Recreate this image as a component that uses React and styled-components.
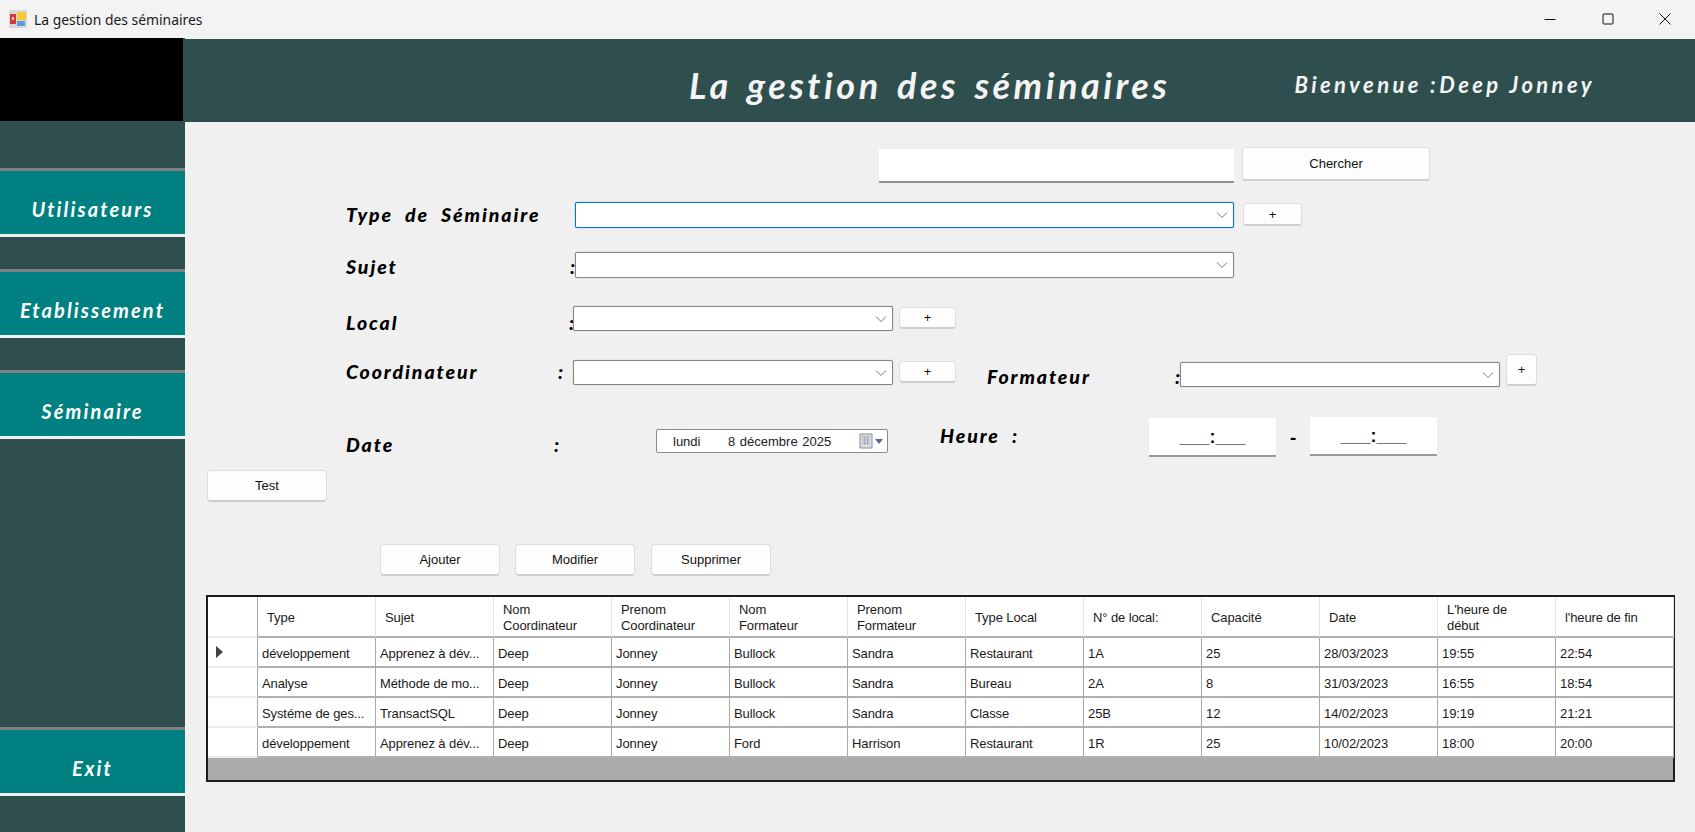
import styled, { createGlobalStyle } from "styled-components";

const GlobalStyle = createGlobalStyle`
  html, body {
    margin: 0;
    height: 100%;
    background: #f0f0f0;
    overflow: hidden;
  }
  * {
    box-sizing: border-box;
  }
`;

const HAND = `"Lato", "Open Sans", sans-serif`;
const UI = `"Liberation Sans", Arial, sans-serif`;

const Window = styled.div`
  width: 1695px;
  height: 832px;
  display: flex;
  flex-direction: column;
  font-family: ${UI};
`;

const TitleBar = styled.div`
  height: 38px;
  background: #f3f3f3;
  display: flex;
  align-items: center;
  padding: 0 1px 0 9px;
`;

const TitleText = styled.span`
  margin-left: 7px;
  font-family: "Noto Sans", "Open Sans", sans-serif;
  font-size: 13.9px;
  color: #1a1a1a;
  flex: 1;
`;

const WinButton = styled.div`
  width: 57.5px;
  height: 38px;
  display: flex;
  align-items: center;
  justify-content: center;
`;

const Frame = styled.div`
  flex: 1;
  display: flex;
  min-height: 0;
`;

const Sidebar = styled.nav`
  width: 185px;
  background: #2f4f4f;
  display: flex;
  flex-direction: column;
`;

const Logo = styled.div`
  height: 83px;
  margin-right: 2px;
  background: #000;
`;

const NavButton = styled.button`
  height: 69px;
  width: 185px;
  margin-top: ${(p) => p.$top}px;
  padding: 12px 0 0;
  background: #008080;
  border: 0;
  border-top: 3px solid #808080;
  border-bottom: 3px solid #f0f0f0;
  color: #fff;
  font-family: ${HAND};
  font-style: italic;
  font-weight: 700;
  font-size: 20px;
  letter-spacing: 2.1px;
`;

const ExitButton = styled(NavButton)`
  margin-top: auto;
  margin-bottom: 36px;
`;

const Main = styled.main`
  flex: 1;
  display: flex;
  flex-direction: column;
  min-width: 0;
`;

const Header = styled.header`
  height: 83px;
  margin-top: 1px;
  padding-top: 8px;
  background: #2f4f4f;
  color: #f4f4f4;
  display: flex;
  align-items: center;
  font-family: ${HAND};
  font-style: italic;
  font-weight: 700;
`;

const HeaderTitle = styled.h1`
  margin: 0 0 0 504px;
  font-size: 36px;
  font-weight: 700;
  letter-spacing: 3.5px;
  word-spacing: 4px;
  white-space: nowrap;
`;

const Welcome = styled.span`
  margin-left: 124px;
  font-size: 22px;
  letter-spacing: 3.4px;
  white-space: nowrap;
`;

const Content = styled.div`
  flex: 1;
  padding-top: 25px;
`;

const Row = styled.div`
  display: flex;
  align-items: flex-start;
  height: ${(p) => p.$h}px;
  margin-top: ${(p) => p.$top || 0}px;
  padding-left: ${(p) => p.$left ?? 161}px;
`;

const Label = styled.div`
  display: flex;
  flex: none;
  width: ${(p) => p.$w}px;
  margin-top: ${(p) => p.$mt || 0}px;
  margin-left: ${(p) => p.$ml || 0}px;
  height: 26px;
  line-height: 26px;
  color: #000;
  font-family: ${HAND};
  font-style: italic;
  font-weight: 900;
  font-size: 19.5px;
  letter-spacing: 1.9px;
  word-spacing: 6px;
  white-space: nowrap;
`;

const Caption = styled.span`
  width: ${(p) => p.$w}px;
  flex: none;
`;

const Combo = styled.div`
  position: relative;
  flex: none;
  width: ${(p) => p.$w}px;
  height: ${(p) => p.$h || 26}px;
  margin-top: ${(p) => p.$mt || 0}px;
  background: #fff;
  border: 1px solid ${(p) => (p.$focused ? "#0078d7" : "#868686")};
  border-radius: 2px;
  box-shadow: 0 0 1px ${(p) => (p.$focused ? "#0078d7" : "#868686")};
  display: flex;
  align-items: center;
  justify-content: flex-end;
  padding-right: 5px;
`;

const PushButton = styled.button`
  flex: none;
  width: ${(p) => p.$w}px;
  height: ${(p) => p.$h}px;
  margin-top: ${(p) => p.$mt || 0}px;
  margin-left: ${(p) => p.$ml || 0}px;
  padding: 0;
  background: #fdfdfd;
  border: 1px solid #dedede;
  border-bottom: 2px solid #cfcfcf;
  border-radius: 4px;
  color: #111;
  font-family: ${UI};
  font-size: 13px;
`;

const SearchInput = styled.div`
  width: 355px;
  height: 34px;
  margin-top: 2px;
  background: #fff;
  border-bottom: 2px solid #8f8f8f;
`;

const DatePicker = styled.div`
  flex: none;
  width: 232px;
  height: 24px;
  margin-top: 12px;
  background: #fff;
  border: 1px solid #8a8a8a;
  border-radius: 2px;
  display: flex;
  align-items: center;
  padding: 0 2px 0 16px;
  font-size: 13px;
  color: #222;
`;

const DateDay = styled.span`
  width: 55px;
`;

const DateValue = styled.span`
  flex: 1;
  word-spacing: 1px;
`;

const MaskInput = styled.div`
  flex: none;
  width: 127px;
  height: 39px;
  margin-top: ${(p) => p.$mt || 0}px;
  background: #fff;
  border-bottom: 2px solid #9a9a9a;
  font-family: ${UI};
  font-weight: 700;
  font-size: 18px;
  line-height: 38px;
  text-align: center;
  color: #000;
`;

const Dash = styled.span`
  flex: none;
  width: 34px;
  margin-top: 8px;
  text-align: center;
  font-family: ${HAND};
  font-weight: 900;
  font-size: 18px;
  line-height: 26px;
`;

const Grid = styled.div`
  width: 1469px;
  height: 187px;
  margin: 19px 0 0 21px;
  background: #ababab;
  border: 2px solid #1c1c1c;
  font-size: 13px;
  letter-spacing: -0.1px;
  color: #1a1a1a;
`;

const GridRow = styled.div`
  display: grid;
  grid-template-columns: 50px repeat(12, 118px);
  height: ${(p) => p.$h}px;
  background: #fff;
`;

const HeadCell = styled.div`
  padding: 3px 0 0 9px;
  display: flex;
  align-items: center;
  line-height: 16px;
  border-right: 1px solid #e6e6e6;
  border-bottom: 2px solid #b0b0b0;
`;

const Cell = styled.div`
  padding: 2px 0 0 4px;
  display: flex;
  align-items: center;
  white-space: nowrap;
  overflow: hidden;
  border-right: 1px solid #a8a8a8;
  border-bottom: 2px solid #b0b0b0;
`;

const RowHeader = styled.div`
  display: flex;
  align-items: center;
  padding-left: 8px;
  border-right: 1px solid #a8a8a8;
  border-bottom: 2px solid #ececec;
`;

const columns = [
  "Type",
  "Sujet",
  ["Nom", "Coordinateur"],
  ["Prenom", "Coordinateur"],
  ["Nom", "Formateur"],
  ["Prenom", "Formateur"],
  "Type Local",
  "N° de local:",
  "Capacité",
  "Date",
  ["L'heure de", "début"],
  "l'heure de fin",
];

const rows = [
  ["développement", "Apprenez à dév...", "Deep", "Jonney", "Bullock", "Sandra", "Restaurant", "1A", "25", "28/03/2023", "19:55", "22:54"],
  ["Analyse", "Méthode de mo...", "Deep", "Jonney", "Bullock", "Sandra", "Bureau", "2A", "8", "31/03/2023", "16:55", "18:54"],
  ["Systéme de ges...", "TransactSQL", "Deep", "Jonney", "Bullock", "Sandra", "Classe", "25B", "12", "14/02/2023", "19:19", "21:21"],
  ["développement", "Apprenez à dév...", "Deep", "Jonney", "Ford", "Harrison", "Restaurant", "1R", "25", "10/02/2023", "18:00", "20:00"],
];

const AppIcon = () => (
  <svg width="18" height="18" viewBox="0 0 18 18">
    <rect width="18" height="18" fill="#d8d8d8" />
    <rect x="1" y="4" width="6" height="10" fill="#d23b3b" />
    <rect x="3" y="7" width="2" height="3" fill="#f4d0d0" />
    <rect x="8" y="2" width="9" height="8" fill="#f7c936" />
    <rect x="8" y="11" width="8" height="5" fill="#5b9be0" />
  </svg>
);

const Chevron = () => (
  <svg width="12" height="8" viewBox="0 0 12 8">
    <path d="M1 1.5 L6 6.5 L11 1.5" fill="none" stroke="#777" strokeWidth="1" />
  </svg>
);

const CalendarIcon = () => (
  <svg width="28" height="18" viewBox="0 0 28 18">
    <rect x="3" y="2" width="12" height="14" fill="#d9dde3" stroke="#8b8f96" />
    <path d="M5 5 H13 M5 8 H13 M5 11 H13 M7.5 5 V13 M10.5 5 V13" stroke="#a3a9b2" />
    <path d="M18 7 H26 L22 12 Z" fill="#4d6a92" />
  </svg>
);

const App = () => {
  return (
    <Window>
      <GlobalStyle />
      <TitleBar>
        <AppIcon />
        <TitleText>La gestion des séminaires</TitleText>
        <WinButton>
          <svg width="12" height="12" viewBox="0 0 12 12">
            <path d="M0.5 6.5 H11.5" stroke="#111" />
          </svg>
        </WinButton>
        <WinButton>
          <svg width="12" height="12" viewBox="0 0 12 12">
            <rect x="1" y="1" width="10" height="10" rx="1" fill="none" stroke="#111" />
          </svg>
        </WinButton>
        <WinButton>
          <svg width="12" height="12" viewBox="0 0 12 12">
            <path d="M0.5 0.5 L11.5 11.5 M11.5 0.5 L0.5 11.5" stroke="#111" />
          </svg>
        </WinButton>
      </TitleBar>

      <Frame>
        <Sidebar>
          <Logo />
          <NavButton $top={47}>Utilisateurs</NavButton>
          <NavButton $top={32}>Etablissement</NavButton>
          <NavButton $top={32}>Séminaire</NavButton>
          <ExitButton>Exit</ExitButton>
        </Sidebar>

        <Main>
          <Header>
            <HeaderTitle>La gestion des séminaires</HeaderTitle>
            <Welcome>Bienvenue :Deep Jonney</Welcome>
          </Header>

          <Content>
            <Row $h={36} $left={694}>
              <SearchInput />
              <PushButton $w={188} $h={34} $ml={8}>Chercher</PushButton>
            </Row>

            <Row $h={26} $top={19}>
              <Label $w={229}>Type de Séminaire</Label>
              <Combo $w={659} $focused><Chevron /></Combo>
              <PushButton $w={59} $h={23} $mt={1} $ml={9}>+</PushButton>
            </Row>

            <Row $h={26} $top={24}>
              <Label $w={229} $mt={2}><Caption $w={224}>Sujet</Caption>:</Label>
              <Combo $w={659}><Chevron /></Combo>
            </Row>

            <Row $h={25} $top={28}>
              <Label $w={227} $mt={4}><Caption $w={223}>Local</Caption>:</Label>
              <Combo $w={320} $h={25}><Chevron /></Combo>
              <PushButton $w={57} $h={22} $mt={1} $ml={6}>+</PushButton>
            </Row>

            <Row $h={33} $top={23}>
              <Label $w={227} $mt={5}><Caption $w={212}>Coordinateur</Caption>:</Label>
              <Combo $w={320} $h={25} $mt={6}><Chevron /></Combo>
              <PushButton $w={57} $h={22} $mt={7} $ml={6}>+</PushButton>
              <Label $w={193} $mt={10} $ml={31}><Caption $w={188}>Formateur</Caption>:</Label>
              <Combo $w={320} $h={25} $mt={8}><Chevron /></Combo>
              <PushButton $w={31} $h={32} $ml={6}>+</PushButton>
            </Row>

            <Row $h={40} $top={30}>
              <Label $w={310} $mt={15}><Caption $w={208}>Date</Caption>:</Label>
              <DatePicker>
                <DateDay>lundi</DateDay>
                <DateValue>8 décembre 2025</DateValue>
                <CalendarIcon />
              </DatePicker>
              <Label $w={209} $mt={6} $ml={52}>Heure :</Label>
              <MaskInput $mt={1}>___:___</MaskInput>
              <Dash>-</Dash>
              <MaskInput>___:___</MaskInput>
            </Row>

            <Row $h={32} $top={13} $left={22}>
              <PushButton $w={120} $h={32}>Test</PushButton>
            </Row>

            <Row $h={32} $top={42} $left={195}>
              <PushButton $w={120} $h={32}>Ajouter</PushButton>
              <PushButton $w={120} $h={32} $ml={15}>Modifier</PushButton>
              <PushButton $w={120} $h={32} $ml={16}>Supprimer</PushButton>
            </Row>

            <Grid>
              <GridRow $h={41}>
                <RowHeader />
                {columns.map((col, i) => (
                  <HeadCell key={i}>
                    {Array.isArray(col) ? (
                      <span>
                        {col[0]}
                        <br />
                        {col[1]}
                      </span>
                    ) : (
                      col
                    )}
                  </HeadCell>
                ))}
              </GridRow>
              {rows.map((row, r) => (
                <GridRow key={r} $h={30}>
                  <RowHeader>
                    {r === 0 && (
                      <svg width="7" height="12" viewBox="0 0 7 12">
                        <path d="M0 0 L7 6 L0 12 Z" fill="#444" />
                      </svg>
                    )}
                  </RowHeader>
                  {row.map((value, c) => (
                    <Cell key={c}>{value}</Cell>
                  ))}
                </GridRow>
              ))}
            </Grid>
          </Content>
        </Main>
      </Frame>
    </Window>
  );
};

export default App;
